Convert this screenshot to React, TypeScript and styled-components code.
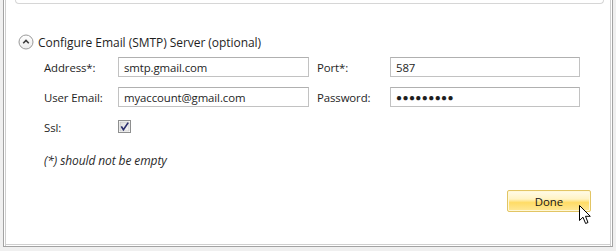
import React from "react";
import styled, { createGlobalStyle } from "styled-components";

const GlobalStyle = createGlobalStyle`
  html, body {
    margin: 0;
    padding: 0;
    background: #f0f0f0;
  }
  body {
    font-family: "Open Sans", "Noto Sans", sans-serif;
  }
`;

const Page = styled.div`
  width: 616px;
  height: 251px;
  background: #f0f0f0;
  overflow: hidden;
`;

const Frame = styled.div`
  position: relative;
  box-sizing: border-box;
  margin-left: 3px;
  width: 610px;
  height: 247px;
  background: #fff;
  border: 1px solid #a3a3a3;
  border-top: none;
  box-shadow: inset 1px 0 0 #fff, inset 2px 0 0 #cfcfcf, inset -1px 0 0 #fff,
    inset -2px 0 0 #cfcfcf, inset 0 -1px 0 #fff, inset 0 -2px 0 #cfcfcf;
  display: flex;
  flex-direction: column;
`;

const TopPanel = styled.div`
  margin: 0 8px 0 11px;
  height: 3px;
  border: 1px solid #d6d6d6;
  border-top: none;
  border-radius: 0 0 4px 4px;
`;

const Section = styled.div`
  padding-left: 14px;
  display: flex;
  flex-direction: column;
`;

const Header = styled.div`
  margin-top: 30px;
  display: flex;
  align-items: center;
  gap: 4px;
  height: 16px;
`;

const Title = styled.span`
  font-size: 12px;
  color: #1e1e1e;
  letter-spacing: -0.05px;
`;

const Form = styled.div`
  margin-top: 7px;
  padding-left: 26px;
  display: grid;
  grid-template-columns: 74px 191px 81px 190px;
  grid-auto-rows: 20px;
  row-gap: 10px;
  align-items: center;
`;

const Label = styled.span<{ $indent?: number }>`
  font-size: 11.4px;
  color: #1e1e1e;
  padding-left: ${(p) => p.$indent || 0}px;
  letter-spacing: -0.1px;
`;

const Field = styled.div<{ $secret?: boolean }>`
  box-sizing: border-box;
  height: 20px;
  border: 1px solid #c2c2c2;
  border-top-color: #b0b0b0;
  padding: 0 5px;
  display: flex;
  align-items: center;
  font-size: ${(p) => (p.$secret ? "10px" : "11.4px")};
  letter-spacing: ${(p) => (p.$secret ? "0.4px" : "-0.1px")};
  color: #1e1e1e;
  background: #fff;
`;

const Note = styled.div`
  margin-top: 15px;
  padding-left: 26px;
  font-size: 12px;
  font-style: italic;
  color: #2a2a2a;
  letter-spacing: -0.1px;
`;

const Footer = styled.div`
  margin-top: 21px;
  padding-right: 21px;
  display: flex;
  justify-content: flex-end;
`;

const DoneButton = styled.button`
  box-sizing: border-box;
  width: 84px;
  height: 22px;
  border: 1px solid #e2c564;
  border-radius: 2px;
  background: linear-gradient(
    to bottom,
    #fffbe8 0%,
    #fff3c4 40%,
    #ffdc66 58%,
    #ffe898 100%
  );
  box-shadow: inset 0 0 0 1px #fff8d8;
  font-family: "Open Sans", "Noto Sans", sans-serif;
  font-size: 11.4px;
  color: #141414;
  padding: 0;
`;

const Pointer = styled.svg`
  position: absolute;
  left: 575px;
  top: 205px;
`;

const ExpandIcon = () => (
  <svg width="16" height="16" viewBox="0 0 16 16">
    <defs>
      <linearGradient id="eg" x1="0" y1="0" x2="0" y2="1">
        <stop offset="0" stopColor="#ffffff" />
        <stop offset="1" stopColor="#ececec" />
      </linearGradient>
    </defs>
    <circle cx="8" cy="8" r="7" fill="url(#eg)" stroke="#9a9a9a" />
    <path d="M5.2 9.3 L8 6.5 L10.8 9.3" fill="none" stroke="#3c3c3c" strokeWidth="1.6" />
  </svg>
);

const CheckBox = () => (
  <svg width="13" height="13" viewBox="0 0 13 13">
    <defs>
      <linearGradient id="cg" x1="0" y1="0" x2="1" y2="1">
        <stop offset="0" stopColor="#dcdcdc" />
        <stop offset="1" stopColor="#f8f8f8" />
      </linearGradient>
    </defs>
    <rect x="0.5" y="0.5" width="12" height="12" fill="#fff" stroke="#8e8f8f" />
    <rect x="2" y="2" width="9" height="9" fill="url(#cg)" stroke="#b8b8b8" strokeWidth="0.6" />
    <path d="M3.3 6.4 L5.4 9.8 L10.2 2.6" fill="none" stroke="#2b2f6e" strokeWidth="1.7" />
  </svg>
);

const App = () => {
  return (
    <Page>
      <GlobalStyle />
      <Frame>
        <TopPanel />
        <Section>
          <Header>
            <ExpandIcon />
            <Title>Configure Email (SMTP) Server (optional)</Title>
          </Header>
          <Form>
            <Label>Address*:</Label>
            <Field>smtp.gmail.com</Field>
            <Label $indent={8}>Port*:</Label>
            <Field>587</Field>
            <Label>User Email:</Label>
            <Field>myaccount@gmail.com</Field>
            <Label $indent={8}>Password:</Label>
            <Field $secret>●●●●●●●●●</Field>
            <Label>Ssl:</Label>
            <div>
              <CheckBox />
            </div>
          </Form>
          <Note>(*) should not be empty</Note>
          <Footer>
            <DoneButton>Done</DoneButton>
          </Footer>
        </Section>
        <Pointer width="13" height="21" viewBox="0 0 13 21">
          <path
            d="M0.5 0.5 L0.5 15.5 L4 12.2 L6.6 18.5 L9 17.5 L6.5 11.3 L11.3 11.3 Z"
            fill="#fff"
            stroke="#000"
            strokeWidth="1"
          />
        </Pointer>
      </Frame>
    </Page>
  );
};

export default App;
